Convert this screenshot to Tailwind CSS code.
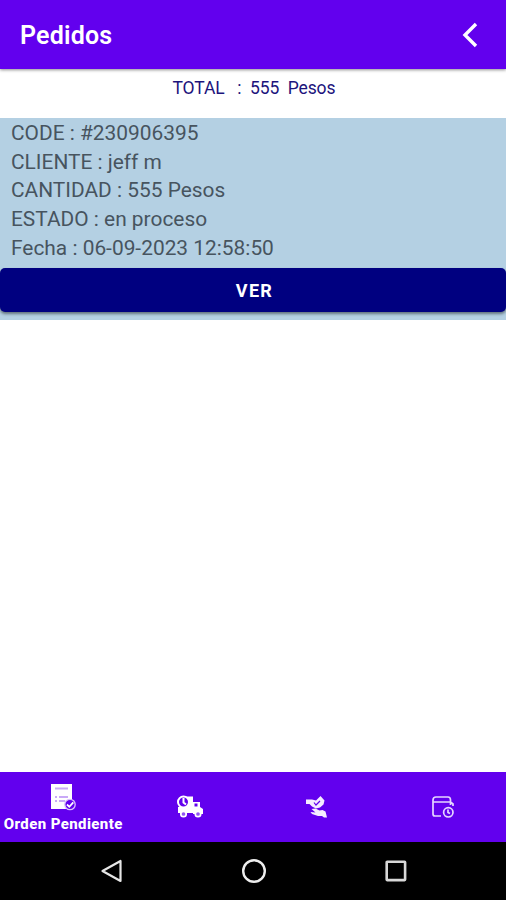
<!DOCTYPE html>
<html lang="es">
<head>
<meta charset="utf-8">
<meta name="viewport" content="width=device-width, initial-scale=1">
<title>Pedidos</title>
<script src="https://cdn.jsdelivr.net/npm/@tailwindcss/browser@4"></script>
</head>
<body class="bg-white">
<div class="w-[506px] h-[900px] flex flex-col overflow-hidden font-[Roboto,sans-serif]">
  <header class="relative z-10 h-[69px] shrink-0 bg-[#6200ee] flex items-center justify-between pl-5 pr-[28px] shadow-[0_1px_3px_rgba(0,0,0,0.45)]">
    <h1 class="text-white font-semibold text-[25px] leading-7 pt-[3px] tracking-[0.2px] whitespace-nowrap">Pedidos</h1>
    <svg class="w-4 h-[26px]" viewBox="0 0 16 26" fill="none" stroke="#fff" stroke-width="3.400"><path d="M14 2 3 13l11 11"/></svg>
  </header>
  <main class="flex-1 flex flex-col">
    <div class="h-[49px] pl-[172.500px] pt-[9px] text-[17.5px] leading-5 tracking-[-0.1px] text-[#1c147c] whitespace-pre">TOTAL   :  555  Pesos</div>
    <section class="h-[202px] bg-[#b4d0e3] flex flex-col">
      <div class="pl-[11px] pt-[1px] text-[20.9px] leading-[28.7px] text-[#47545f] whitespace-nowrap">
        <p>CODE : #230906395</p>
        <p>CLIENTE : jeff m</p>
        <p>CANTIDAD : 555 Pesos</p>
        <p>ESTADO : en proceso</p>
        <p>Fecha : 06-09-2023 12:58:50</p>
      </div>
      <button class="mt-[5px] h-[44px] w-full shrink-0 rounded-[5px] bg-[#000080] text-white text-[18px] font-bold tracking-[1.3px] pt-px pl-[3px] shadow-[0_2px_3px_rgba(0,0,0,0.45)]">VER</button>
    </section>
  </main>
  <nav class="h-[70px] shrink-0 bg-[#6200ee] grid grid-cols-4">
    <div class="flex flex-col items-center pt-[11px]">
      <svg class="w-[26px] h-[28px]" viewBox="0 0 26 28" fill="none">
        <path d="M1 1h21v25H1z" fill="#fff"/>
        <path d="M5 5.500h13M5 14h2M9 14h9M5 18h2M9 18h6" stroke="#c9a9f7" stroke-width="2"/>
        <circle cx="20" cy="21.500" r="5.200" fill="#6200ee" stroke="#d9c2fb" stroke-width="1.300"/>
        <path d="m17 21.500 2.300 2.300 4-4.500" stroke="#fff" stroke-width="1.800"/>
      </svg>
      <span class="text-white text-[15px] leading-[18px] font-extrabold mt-[4px] whitespace-nowrap tracking-[0.4px]">Orden Pendiente</span>
    </div>
    <div class="flex justify-center pt-[22px]">
      <svg class="w-[28px] h-[26px]" viewBox="0 0 28 26" fill="none">
        <path d="M7 2.500h10v16.500H2v-6h5z" fill="#fff"/>
        <path d="M17 8h7v5l3 2v5H17z" fill="#fff"/>
        <path d="M18.500 9.500h3v3h-3z" fill="#6200ee"/>
        <circle cx="7.500" cy="8" r="5.500" fill="#6200ee" stroke="#fff" stroke-width="2"/>
        <path d="M7.500 4v4.500l2.500 2" stroke="#fff" stroke-width="2"/>
        <circle cx="7.500" cy="20" r="2.700" fill="#9152f2" stroke="#fff" stroke-width="1.700"/>
        <circle cx="22" cy="20" r="2.700" fill="#9152f2" stroke="#fff" stroke-width="1.700"/>
      </svg>
    </div>
    <div class="flex justify-center pt-[23px]">
      <svg class="w-[23px] h-[24px]" viewBox="0 0 23 24" fill="none">
        <path d="M1 4.500h6l4 1L15.500 1l4 4.500-1 4-3.500 3-4 1-4-2-2.500-2.500H1z" fill="#f5edff"/>
        <path d="m9 7.500 2 2.500 4-4" stroke="#6200ee" stroke-width="1.200"/>
        <path d="m6.500 14 4-.5 4 2 3-.500 3 1.500 1.500 6h-3l-2-1.500h-4l-6-2-1.500-2 5 .5z" fill="#f5edff"/>
      </svg>
    </div>
    <div class="flex justify-center pt-[23px]">
      <svg class="w-[24px] h-[24px]" viewBox="0 0 24 24" fill="none" stroke="#e5d6ff" stroke-width="1.700">
        <path d="M10 21H4q-2 0-2-2V5q0-3 3-3h12q2.500 0 2.500 3v5M2 7h17.500M19.500 7l2.500 2v2"/>
        <circle cx="17.300" cy="17.300" r="4.700"/>
        <path d="M17 14.500v3l2 1"/>
      </svg>
    </div>
  </nav>
  <footer class="h-[58px] shrink-0 bg-black flex items-center pl-[100px] pr-[98px] justify-between">
    <svg class="w-[24px] h-[26px]" viewBox="0 0 24 26" fill="none" stroke="#e6e6e6" stroke-width="2.200"><path d="M20.500 3v20L2.500 13z" stroke-linejoin="round"/></svg>
    <svg class="w-[26px] h-[26px]" viewBox="0 0 26 26" fill="none" stroke="#eee" stroke-width="2.400"><circle cx="13" cy="13" r="10.800"/></svg>
    <svg class="w-[24px] h-[24px]" viewBox="0 0 24 24" fill="none" stroke="#d8d8d8" stroke-width="2.600"><rect x="2.700" y="2.700" width="18.400" height="18.400" rx=".5"/></svg>
  </footer>
</div>
</body>
</html>
